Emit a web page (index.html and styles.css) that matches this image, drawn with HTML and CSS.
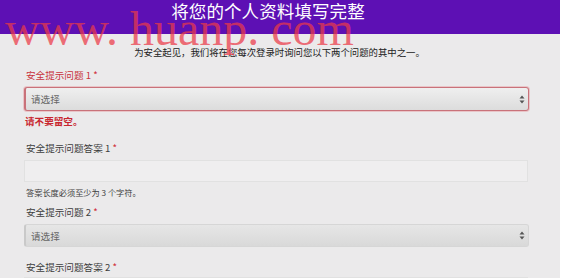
FILE: index.html
```html
<!DOCTYPE html>
<html lang="zh">
<head>
<meta charset="utf-8">
<link rel="stylesheet" href="styles.css">
</head>
<body>
<div class="panel">
  <div class="header">将您的个人资料填写完整</div>
  <div class="body">
    <p class="intro">为安全起见，我们将在您每次登录时询问您以下两个问题的其中之一。</p>
    <div class="label error-label">安全提示问题 1 <span class="star">*</span></div>
    <div class="select invalid">
      <span>请选择</span>
      <svg class="arrows" width="6" height="9" viewBox="0 0 6 9"><path d="M3 0.5L5.5 3.5H0.5Z M3 8.5L5.5 5.5H0.5Z" fill="#555"/></svg>
    </div>
    <div class="error">请不要留空。</div>
    <div class="label gap-lg">安全提示问题答案 1 <span class="star">*</span></div>
    <div class="input"></div>
    <div class="hint">答案长度必须至少为 3 个字符。</div>
    <div class="label gap-sm">安全提示问题 2 <span class="star">*</span></div>
    <div class="select">
      <span>请选择</span>
      <svg class="arrows" width="6" height="9" viewBox="0 0 6 9"><path d="M3 0.5L5.5 3.5H0.5Z M3 8.5L5.5 5.5H0.5Z" fill="#555"/></svg>
    </div>
    <div class="label gap-lg">安全提示问题答案 2 <span class="star">*</span></div>
    <div class="input input-last"></div>
  </div>
  <div class="watermark">www. huanp. com</div>
</div>
</body>
</html>
```
FILE: styles.css
```css
html, body {
  margin: 0;
  padding: 0;
  background: #ffffff;
  height: 100%;
  overflow: hidden;
}
body {
  font-family: "Noto Sans CJK SC", "Noto Sans", sans-serif;
}
.panel {
  position: relative;
  width: 560px;
  height: 278px;
  background: #ebeaeb;
  overflow: hidden;
}
.header {
  height: 34px;
  box-sizing: border-box;
  background: #5d10b4;
  color: #ffffff;
  font-size: 17.5px;
  line-height: 21px;
  text-align: center;
  padding-right: 24px;
  letter-spacing: 0.1px;
}
.body {
  padding: 0 31px 0 24px;
  display: flex;
  flex-direction: column;
}
.intro {
  margin: 11px 0 0 0;
  font-size: 9.4px;
  line-height: 14px;
  color: #222222;
  text-align: center;
  padding-left: 6px;
}
.label {
  margin-top: 9px;
  padding-left: 2px;
  font-size: 9.6px;
  line-height: 14px;
  color: #3d3d3d;
}
.error-label {
  color: #c8323b;
}
.star {
  color: #d0303a;
}
.gap-lg {
  margin-top: 13px;
}
.gap-sm {
  margin-top: 7px;
}
.select {
  margin-top: 5px;
  height: 23px;
  box-sizing: border-box;
  border: 1px solid #d6d6d6;
  border-left: 2px solid #c9c9c9;
  border-radius: 3px;
  background: linear-gradient(#e6e6e6, #d9d9d9);
  display: flex;
  align-items: center;
  justify-content: space-between;
  padding: 0 3px 0 5px;
  font-size: 9.6px;
  color: #666666;
}
.select.invalid {
  height: 24px;
  border: 1px solid #c9727a;
  border-left: 2px solid #c9727a;
  box-shadow: 0 0 0 1px #e9c5c8;
  background: linear-gradient(#efefef, #dcdcdc);
}
.arrows {
  display: block;
}
.error {
  margin-top: 3px;
  padding-left: 1px;
  font-size: 9.6px;
  line-height: 14px;
  font-weight: bold;
  color: #c8262f;
}
.input {
  margin-top: 5px;
  height: 22px;
  box-sizing: border-box;
  border: 1px solid #e1e1e1;
  background: #efeeef;
  margin-right: 1px;
}
.input-last {
  margin-top: 3px;
}
.hint {
  margin-top: 4px;
  padding-left: 2px;
  font-size: 8.2px;
  line-height: 12px;
  color: #3d3d3d;
}
.watermark {
  position: absolute;
  left: 5px;
  top: 5px;
  font-family: "Liberation Serif", serif;
  font-size: 48px;
  line-height: 48px;
  color: rgba(236, 58, 72, 0.72);
  white-space: pre;
  pointer-events: none;
}
```
